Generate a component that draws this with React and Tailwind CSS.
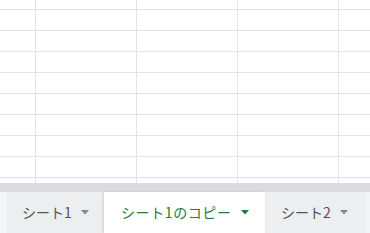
const cols = [36, 101, 101, 101, 31];
const rows = [10, 21, 21, 21, 21, 21, 21, 21, 21];

function Caret({ active }) {
  return (
    <svg width="8" height="5" viewBox="0 0 8 5" className="shrink-0">
      <path d="M0 0 L8 0 L4 4.5 Z" fill={active ? "#188038" : "#80868b"} />
    </svg>
  );
}

function Tab({ label, active, width }) {
  return (
    <div
      className={`flex h-full shrink-0 items-center gap-[9px] text-[14px] ${
        active
          ? "bg-white pl-[17px] tracking-[0.6px] text-[#2b7a3d] shadow-[-1px_0_2px_rgba(0,0,0,0.12)]"
          : "bg-[#eceef0] pl-[16px] text-[#505356] border-l border-[#f8f9fa]"
      }`}
      style={{ width }}
    >
      <span className="whitespace-nowrap leading-none pb-[1px]">{label}</span>
      <Caret active={active} />
    </div>
  );
}

export default function App() {
  return (
    <div
      className="flex h-[233px] w-[370px] flex-col overflow-hidden bg-white"
      style={{ fontFamily: '"Noto Sans CJK JP", "Noto Sans", sans-serif' }}
    >
      {/* grid */}
      <div className="flex h-[183px] flex-col">
        {rows.map((h, r) => (
          <div key={r} className="flex shrink-0 border-b border-[#e2e3e3]" style={{ height: h }}>
            {cols.map((w, c) => (
              <div
                key={c}
                className={`h-full shrink-0 ${c < 4 ? "border-r border-[#e2e3e3]" : ""}`}
                style={{ width: w }}
              />
            ))}
          </div>
        ))}
        <div className="flex flex-1">
          {cols.map((w, c) => (
            <div
              key={c}
              className={`h-full shrink-0 ${c < 4 ? "border-r border-[#e2e3e3]" : ""}`}
              style={{ width: w }}
            />
          ))}
        </div>
      </div>

      {/* scrollbar strip */}
      <div className="h-[9px] shrink-0 bg-[#dadce0]" />

      {/* sheet tabs */}
      <div className="flex h-[41px] shrink-0 bg-[#f3f4f5] pl-[5px]">
        <Tab label="シート1" width={99} />
        <Tab label="シート1のコピー" width={160} active />
        <Tab label="シート2" width={102} />
      </div>
    </div>
  );
}
